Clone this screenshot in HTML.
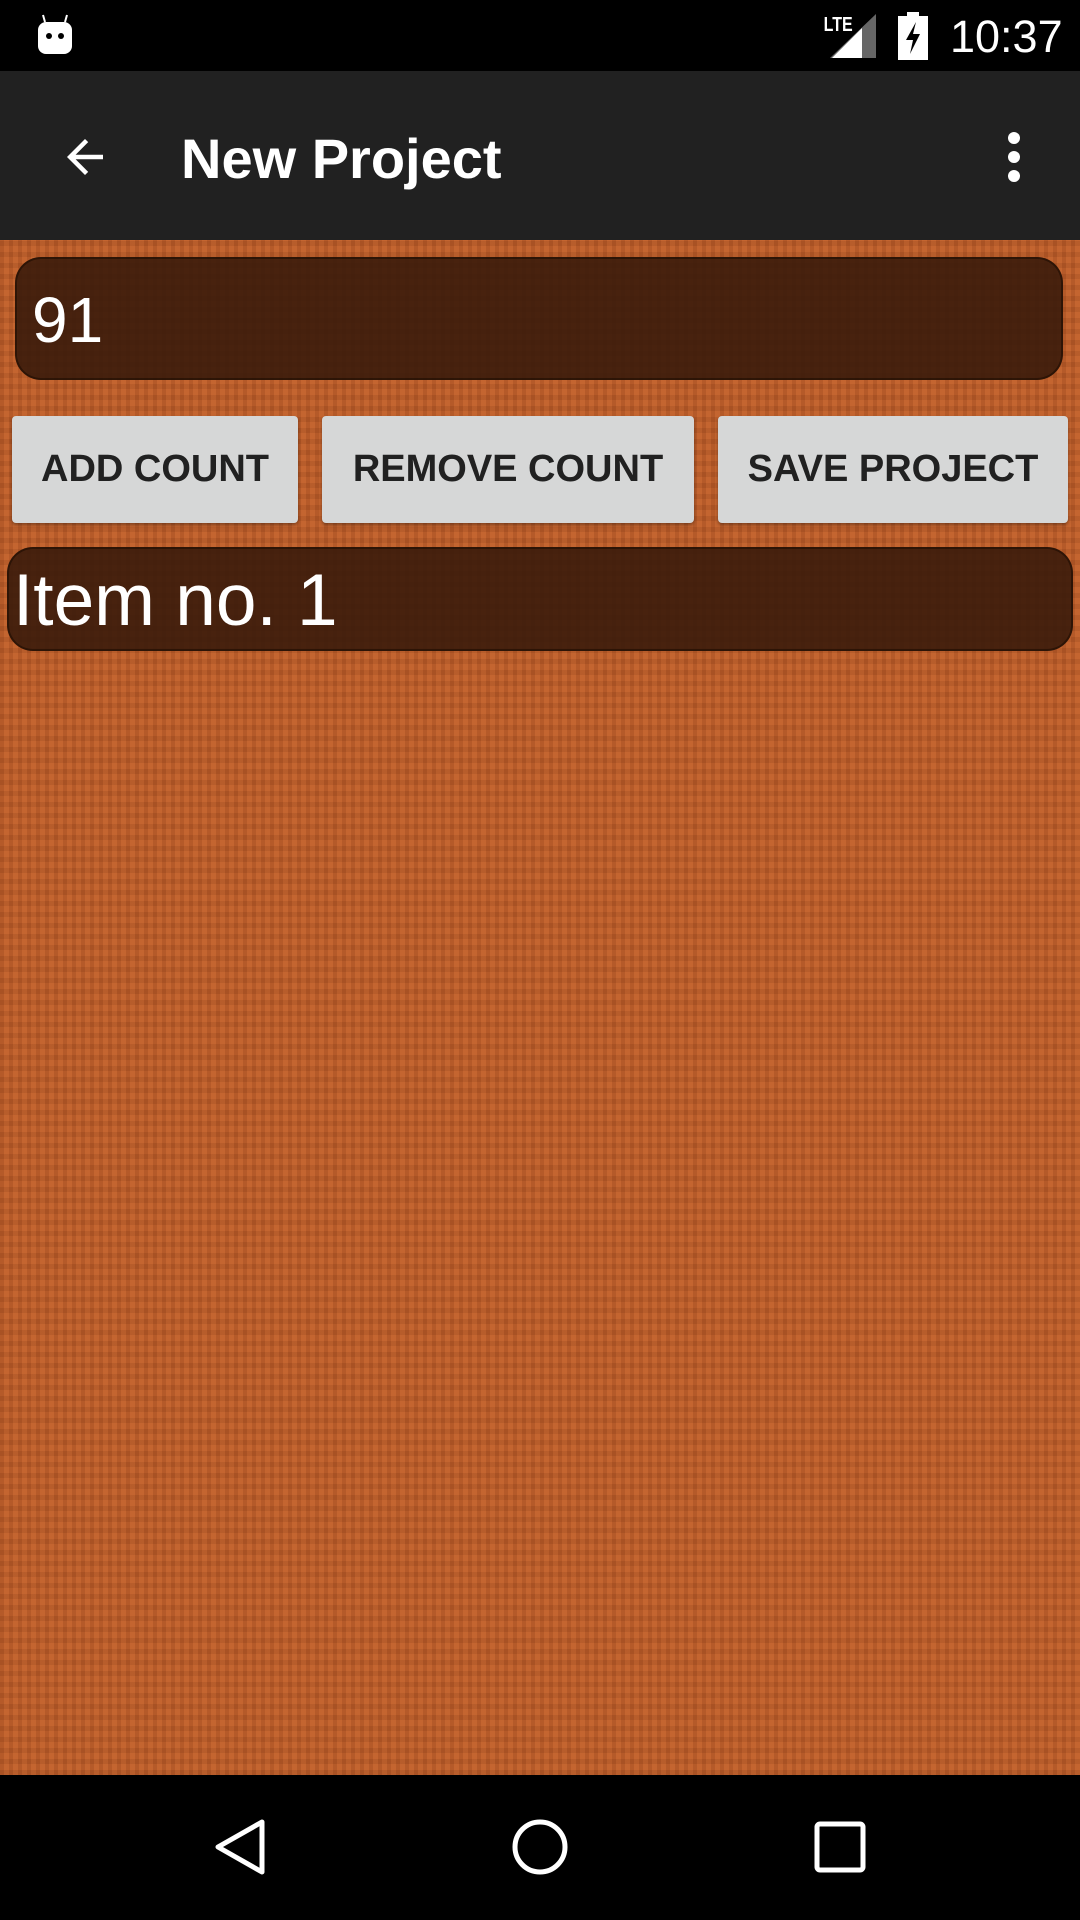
<!DOCTYPE html>
<html><head><meta charset="utf-8"><style>
*{margin:0;padding:0;box-sizing:border-box}
body{width:1080px;height:1920px;overflow:hidden;font-family:"Liberation Sans",sans-serif;position:relative;background:#bd5c28}
.bg{position:absolute;left:0;top:240px;width:1080px;height:1535px;background:#bd5c28;
background-image:repeating-linear-gradient(90deg,rgba(0,0,0,0.06) 0 4px,rgba(255,180,120,0.06) 4px 9px),repeating-linear-gradient(0deg,rgba(0,0,0,0.05) 0 5px,rgba(255,170,110,0.05) 5px 11px)}
.status{position:absolute;left:0;top:0;width:1080px;height:71px;background:#000}
.toolbar{position:absolute;left:0;top:71px;width:1080px;height:169px;background:#212121}
.title{position:absolute;left:181px;top:124px;color:#fff;font-size:56px;font-weight:bold;line-height:70px}
.box{position:absolute;background:rgba(55,25,10,0.88);border-radius:26px;border:2px solid rgba(20,8,0,0.5);color:#fff}
.btn{position:absolute;top:416px;height:107px;background:#d6d7d7;border-radius:4px;color:#212121;font-size:38px;font-weight:bold;text-align:center;line-height:107px;box-shadow:0 2px 3px rgba(0,0,0,0.35)}
.nav{position:absolute;left:0;top:1775px;width:1080px;height:145px;background:#000}
</style></head><body>
<div class="status">
 <svg style="position:absolute;left:35px;top:14px" width="40" height="42" viewBox="0 0 40 42"><line x1="10" y1="8" x2="8" y2="1" stroke="#fff" stroke-width="2"/><line x1="30" y1="8" x2="32" y2="1" stroke="#fff" stroke-width="2"/><rect x="3" y="8" width="34" height="32" rx="8" fill="#fff"/><circle cx="14" cy="22" r="3" fill="#000"/><circle cx="26" cy="22" r="3" fill="#000"/></svg>
 <div style="position:absolute;left:820px;top:14px;color:#fff;font-size:20px;font-weight:bold;transform:scaleX(0.8)">LTE</div>
 <svg style="position:absolute;left:830px;top:14px" width="46" height="44"><polygon points="46,0 46,44 0,44" fill="#666"/><polygon points="32,14 32,44 2,44" fill="#fff"/></svg>
 <svg style="position:absolute;left:898px;top:12px" width="30" height="48"><rect x="9" y="0" width="12" height="5" fill="#fff"/><rect x="0" y="4" width="30" height="44" fill="#fff"/><polygon points="18,10 8,28 15,28 12,42 22,22 15,22" fill="#000"/></svg>
 <div style="position:absolute;left:950px;top:10px;color:#fff;font-size:45px;line-height:54px">10:37</div>
</div>
<div class="toolbar"></div>
<svg style="position:absolute;left:58px;top:130px" width="54" height="54" viewBox="0 0 24 24"><path d="M20 11H7.83l5.59-5.59L12 4l-8 8 8 8 1.41-1.41L7.83 13H20v-2z" fill="#fff"/></svg>
<div class="title">New Project</div>
<svg style="position:absolute;left:1000px;top:130px" width="28" height="54"><circle cx="14" cy="8" r="6" fill="#fff"/><circle cx="14" cy="27" r="6" fill="#fff"/><circle cx="14" cy="46" r="6" fill="#fff"/></svg>
<div class="bg"></div>
<div class="box" style="left:15px;top:257px;width:1048px;height:123px;font-size:64px;line-height:123px;padding-left:15px">91</div>
<div class="btn" style="left:12px;width:286px">ADD COUNT</div>
<div class="btn" style="left:322px;width:372px">REMOVE COUNT</div>
<div class="btn" style="left:718px;width:350px">SAVE PROJECT</div>
<div class="box" style="left:7px;top:547px;width:1066px;height:104px;font-size:73px;line-height:104px;padding-left:4px">Item no. 1</div>
<div class="nav">
 <svg style="position:absolute;left:210px;top:42px" width="60" height="60"><polygon points="52,5 52,55 8,30" fill="none" stroke="#fff" stroke-width="5" stroke-linejoin="round"/></svg>
 <svg style="position:absolute;left:510px;top:42px" width="60" height="60"><circle cx="30" cy="30" r="25" fill="none" stroke="#fff" stroke-width="5"/></svg>
 <svg style="position:absolute;left:812px;top:44px" width="56" height="56"><rect x="5" y="5" width="46" height="46" rx="3" fill="none" stroke="#fff" stroke-width="5"/></svg>
</div>
</body></html>
